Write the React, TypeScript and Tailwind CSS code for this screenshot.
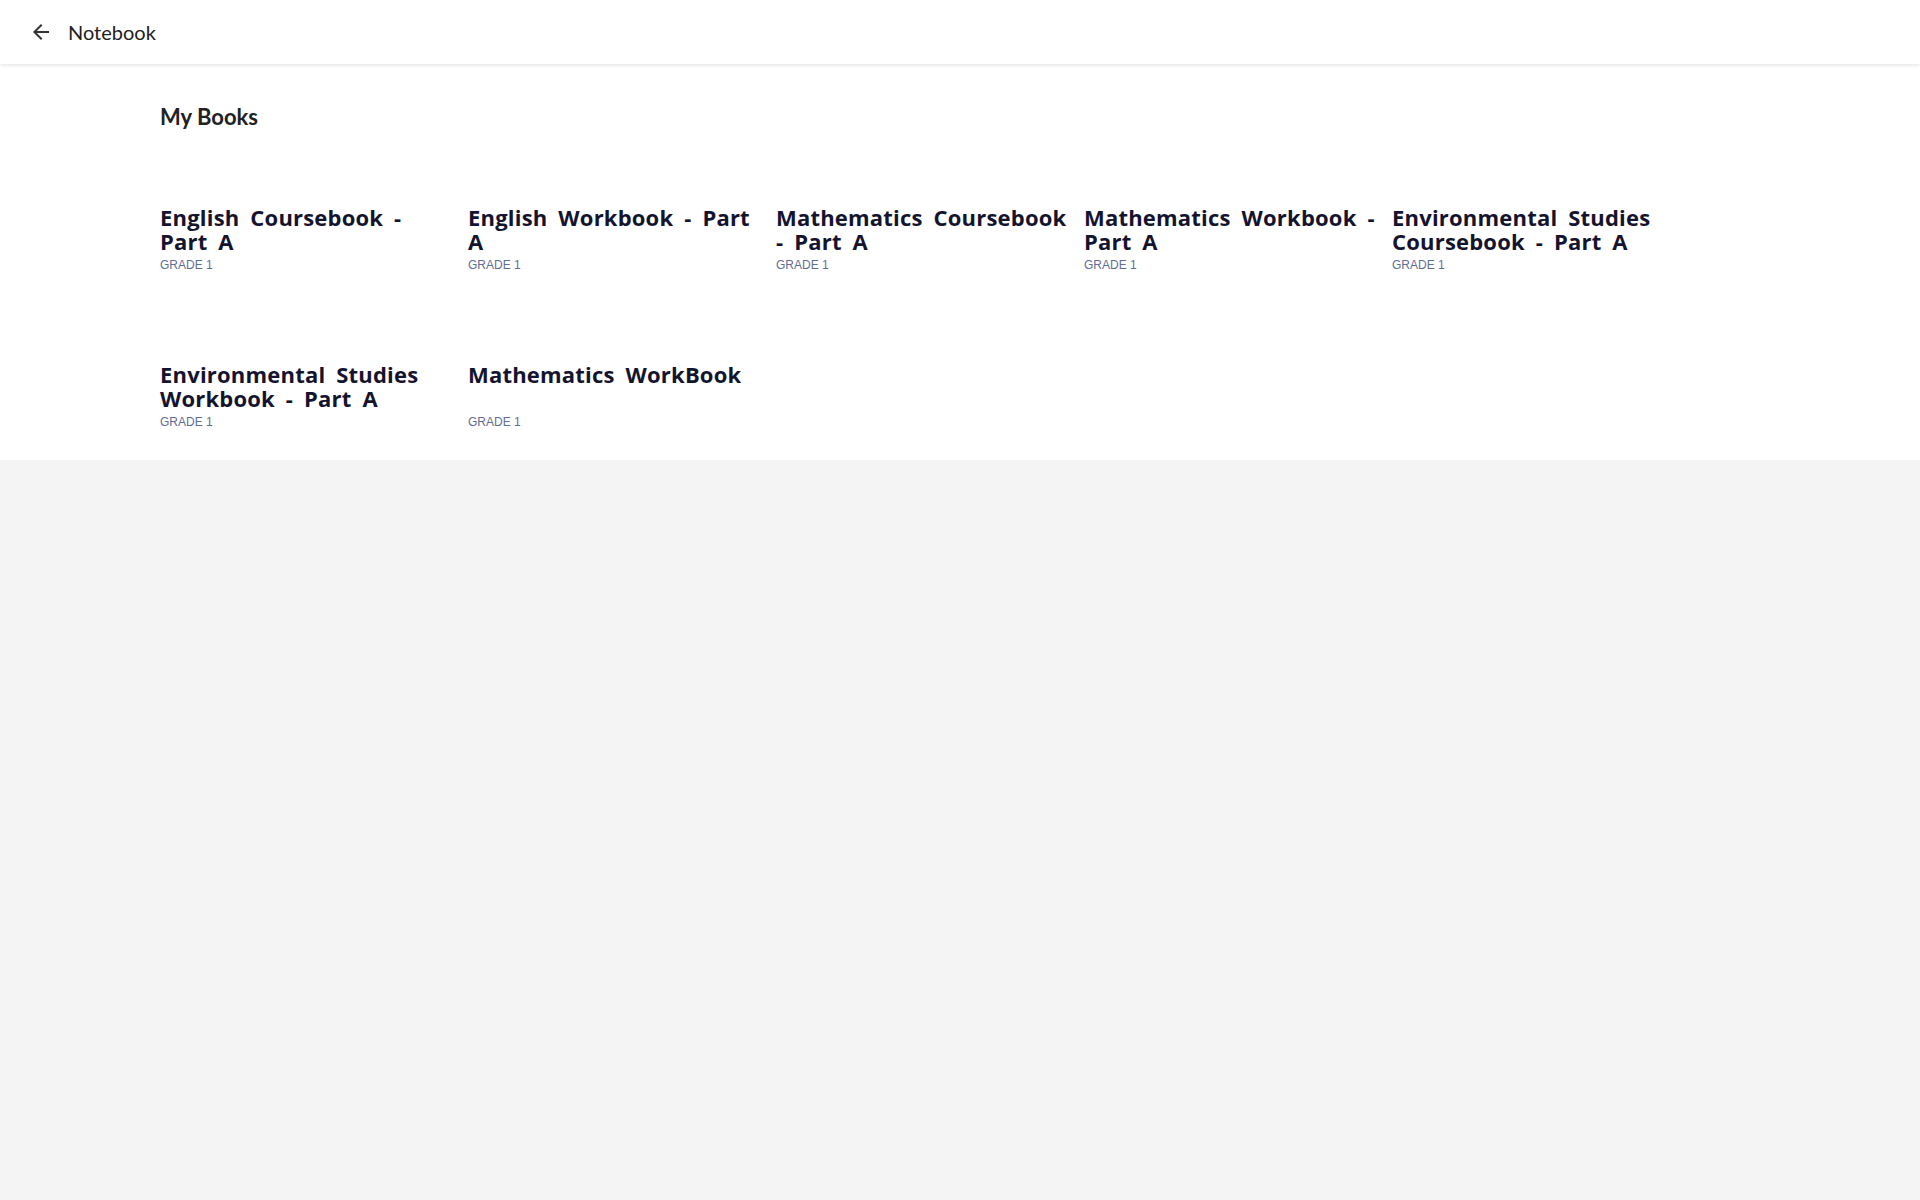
const books = [
  'English Coursebook - Part A',
  'English Workbook - Part A',
  'Mathematics Coursebook - Part A',
  'Mathematics Workbook - Part A',
  'Environmental Studies Coursebook - Part A',
  'Environmental Studies Workbook - Part A',
  'Mathematics WorkBook',
];

function BackIcon() {
  return (
    <svg viewBox="0 0 24 24" className="h-6 w-6 fill-[#333333]">
      <path d="M20 11H7.83l5.59-5.59L12 4l-8 8 8 8 1.41-1.41L7.83 13H20v-2z" />
    </svg>
  );
}

function BookCard({ title }: { title: string }) {
  return (
    <div className="flex flex-col">
      <h3 className="min-h-12 font-['Open_Sans',sans-serif] text-[22px] leading-6 font-bold tracking-[0.2px] [word-spacing:5px] text-[#14142e]">{title}</h3>
      <span className="mt-1 font-['Liberation_Sans',Arial,sans-serif] text-xs leading-4 text-[#5f6d93]">GRADE 1</span>
    </div>
  );
}

export default function App() {
  return (
    <div className="min-h-[1200px] bg-[#f4f4f4]">
      <header className="relative z-10 flex h-16 items-center gap-[15px] bg-white pl-[29px] shadow-[0_1px_4px_rgba(0,0,0,0.12)]">
        <BackIcon />
        <span className="font-['Lato',sans-serif] text-[20px] text-[#212121]">Notebook</span>
      </header>
      <main className="bg-white px-[160px] pt-[39px] pb-[30px]">
        <h2 className="font-['Lato',sans-serif] text-[22px] leading-7 font-bold text-[#222222]">My Books</h2>
        <div className="mt-[74px] grid grid-cols-[repeat(5,294px)] gap-x-[14px] gap-y-[89px]">
          {books.map((b) => (
            <BookCard key={b} title={b} />
          ))}
        </div>
      </main>
    </div>
  );
}
